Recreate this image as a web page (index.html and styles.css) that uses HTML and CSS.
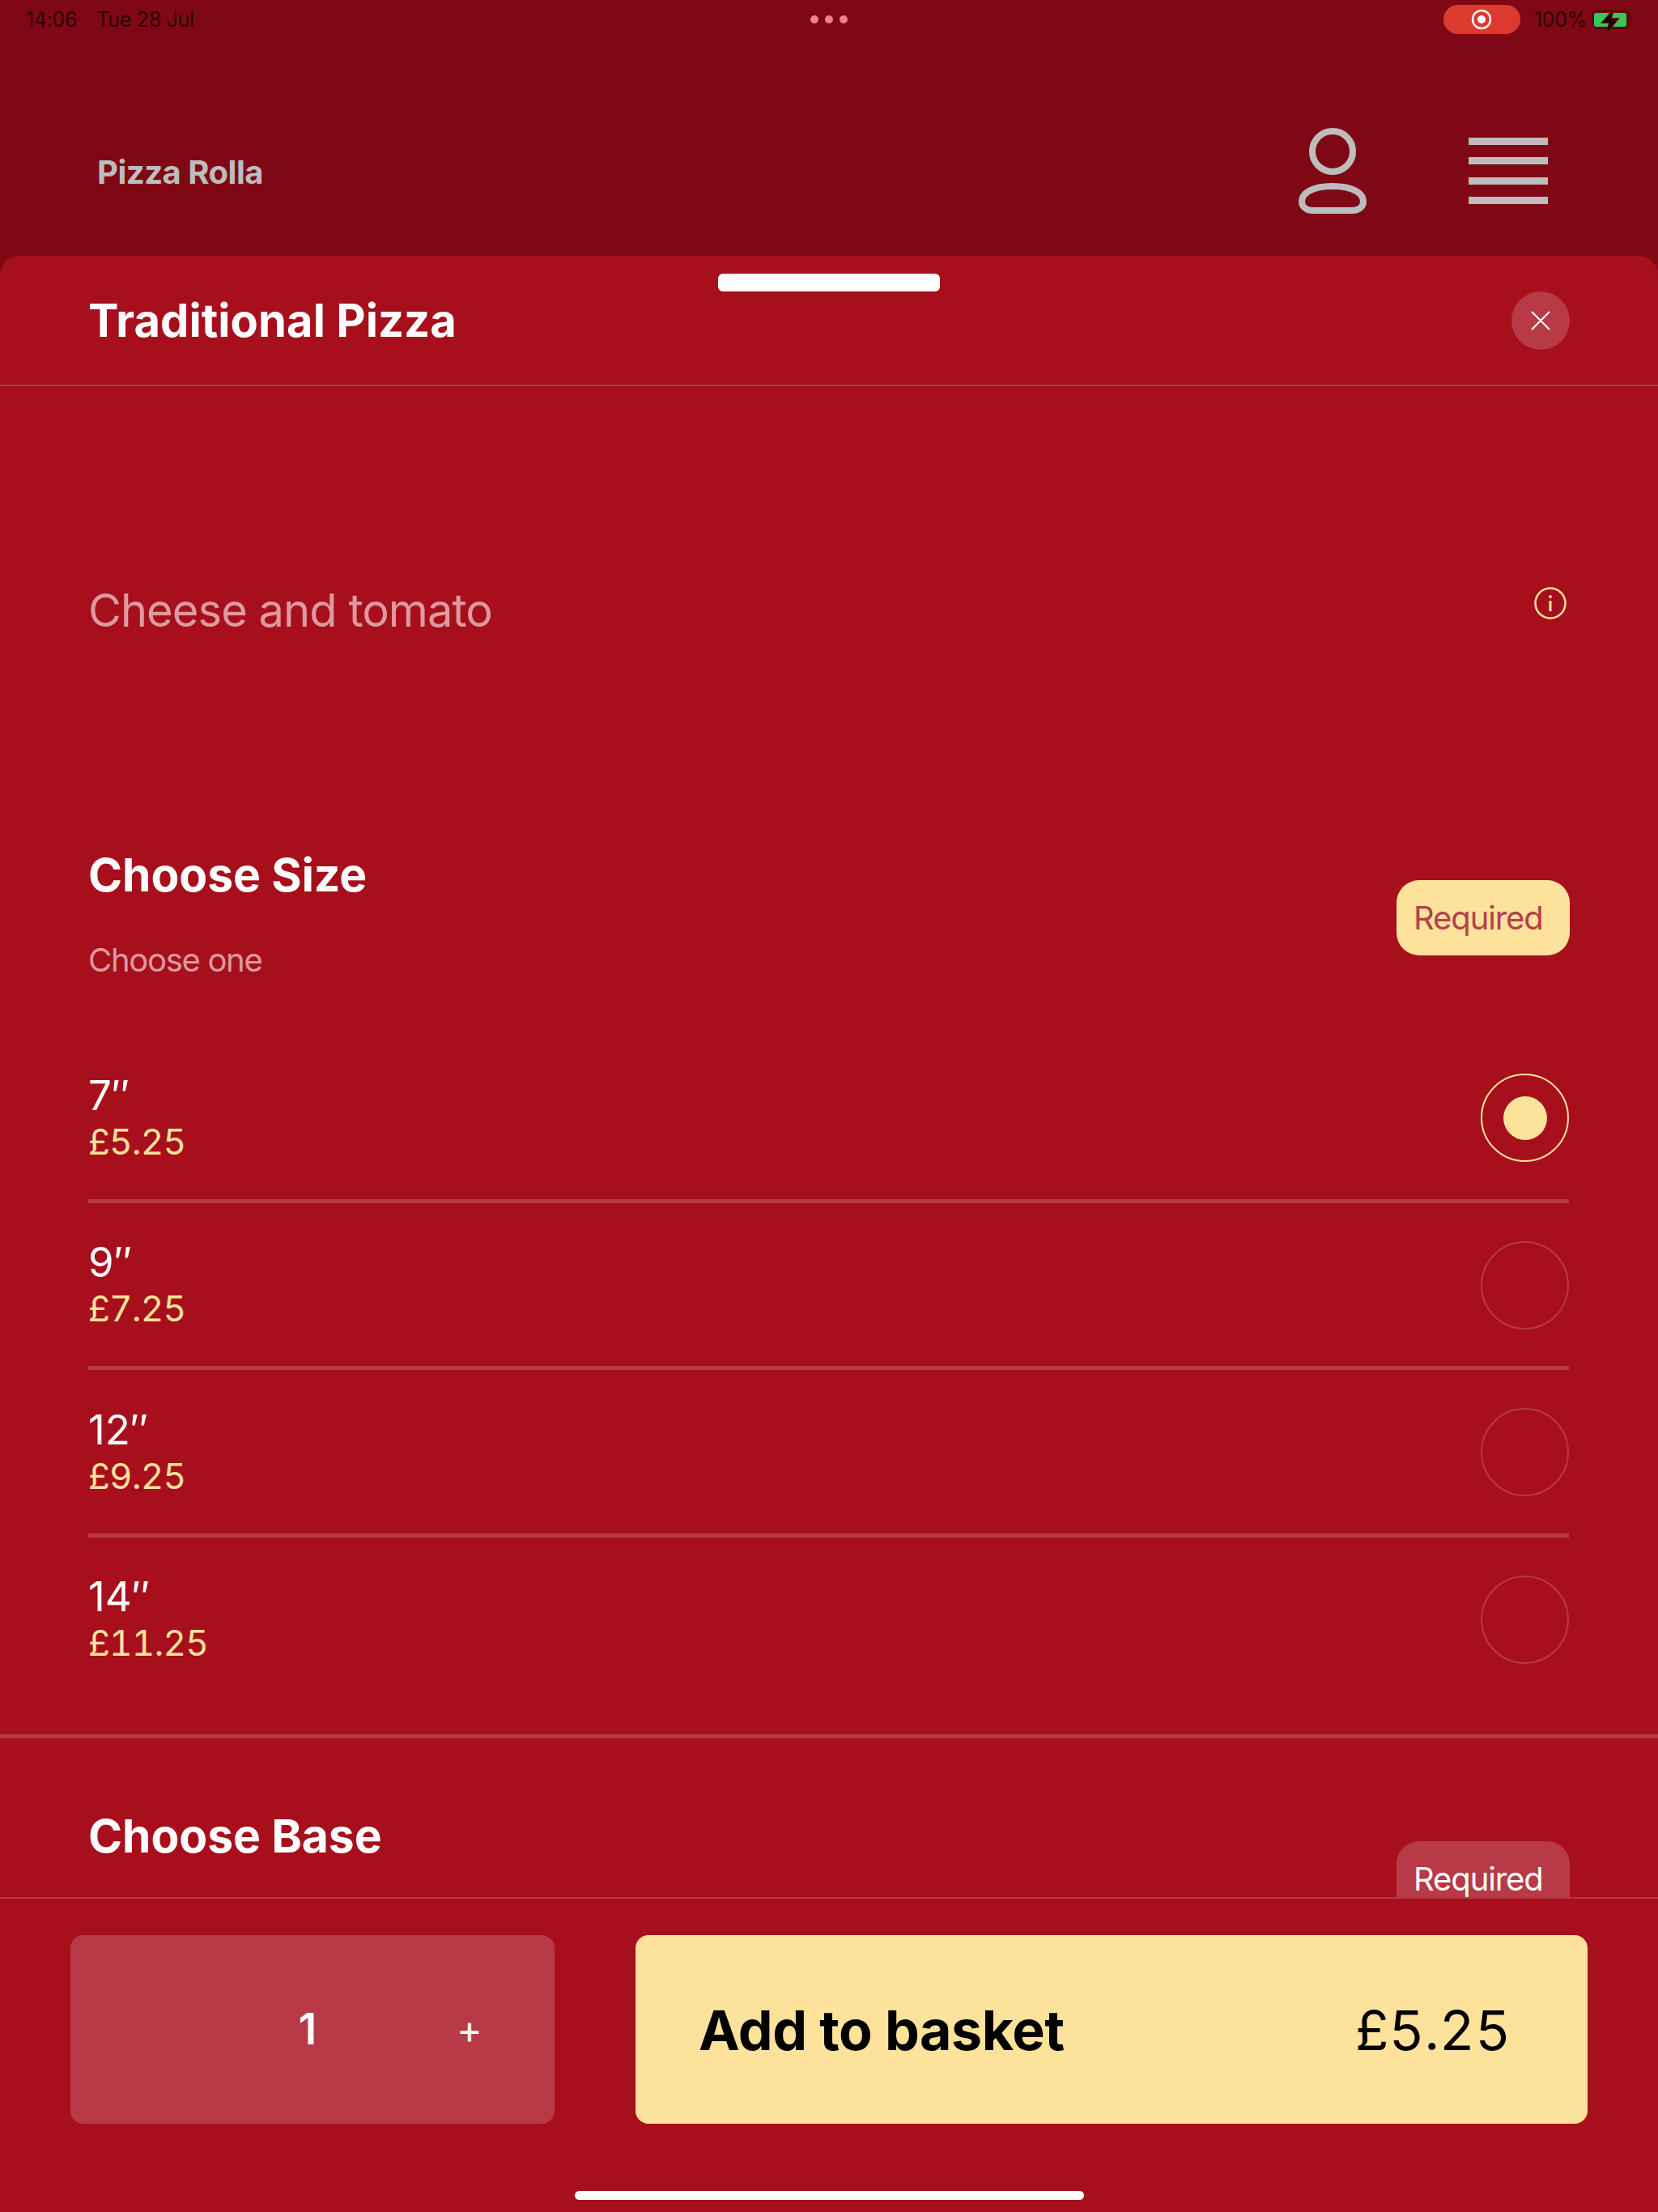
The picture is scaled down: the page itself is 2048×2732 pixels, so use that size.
FILE: index.html
```html
<!DOCTYPE html>
<html lang="en">
<head>
<meta charset="utf-8">
<title>Pizza Rolla</title>
<link rel="stylesheet" href="styles.css">
</head>
<body>
<div class="app">
  <header class="top">
    <div class="status">
      <div class="status-time"><span>14:06</span><span>Tue 28 Jul</span></div>
      <div class="status-dots"><i></i><i></i><i></i></div>
      <div class="status-right">
        <div class="rec">
          <svg width="26" height="26" viewBox="0 0 26 26"><circle cx="13" cy="13" r="11" fill="none" stroke="#fff" stroke-width="2.4"/><circle cx="13" cy="13" r="5" fill="#fff"/></svg>
        </div>
        <span class="pct">100%</span>
        <svg class="battery" width="52" height="32" viewBox="0 0 52 32">
          <rect x="2.500" y="5.500" width="44" height="21" rx="5" fill="none" stroke="#5a0610" stroke-width="3"/>
          <rect x="4" y="8" width="40" height="17" rx="3" fill="#34c759"/>
          <path d="M49 12c3 1 3 7 0 8z" fill="#5a0610"/>
          <path d="M28 4 14 20h9l-3 12 14-17h-9z" fill="#1c0003" stroke="#800815" stroke-width="2" paint-order="stroke"/>
        </svg>
      </div>
    </div>
    <div class="brand-row">
      <div class="brand">Pizza Rolla</div>
      <div class="brand-icons">
        <svg width="93" height="112" viewBox="0 0 93 112" fill="none" stroke="#bdbdbd" stroke-width="8">
          <circle cx="46" cy="32" r="25"/>
          <path d="M22 105H70C79 105 84 100 84 94C84 84 72 75 46 75C20 75 8 84 8 94C8 100 13 105 22 105Z"/>
        </svg>
        <svg width="98" height="82" viewBox="0 0 98 82" fill="#bdbdbd">
          <rect y="0" width="98" height="9"/><rect y="24" width="98" height="9"/><rect y="49" width="98" height="9"/><rect y="73" width="98" height="9"/>
        </svg>
      </div>
    </div>
  </header>

  <main class="sheet">
    <div class="handle"></div>
    <div class="sheet-head">
      <h1 class="sheet-title">Traditional Pizza</h1>
      <button class="close" aria-label="Close">
        <svg width="26" height="26" viewBox="0 0 26 26" stroke="#fff" stroke-width="2"><path d="M2 2l22 22M24 2 2 24"/></svg>
      </button>
    </div>

    <div class="sheet-body">
      <div class="desc">
        <p class="desc-text">Cheese and tomato</p>
        <svg class="info" width="40" height="40" viewBox="0 0 40 40"><circle cx="20" cy="20" r="18.500" fill="none" stroke="#fde29b" stroke-width="2.500"/><rect x="18.500" y="17" width="3" height="13" fill="#fde29b"/><circle cx="20" cy="12" r="2" fill="#fde29b"/></svg>
      </div>

      <section class="group">
        <div class="group-head">
          <div>
            <h2 class="group-title">Choose Size</h2>
            <p class="group-sub">Choose one</p>
          </div>
          <span class="pill pill-on">Required</span>
        </div>
        <div class="rows">
          <div class="row">
            <div class="row-text"><div class="row-name">7″</div><div class="row-price">£5.25</div></div>
            <div class="radio radio-on"></div>
          </div>
          <div class="row">
            <div class="row-text"><div class="row-name">9″</div><div class="row-price">£7.25</div></div>
            <div class="radio"></div>
          </div>
          <div class="row">
            <div class="row-text"><div class="row-name">12″</div><div class="row-price">£9.25</div></div>
            <div class="radio"></div>
          </div>
          <div class="row">
            <div class="row-text"><div class="row-name">14″</div><div class="row-price">£11.25</div></div>
            <div class="radio"></div>
          </div>
        </div>
      </section>

      <section class="group">
        <div class="group-head">
          <div>
            <h2 class="group-title">Choose Base</h2>
          </div>
          <span class="pill">Required</span>
        </div>
      </section>
    </div>

    <footer class="foot">
      <div class="stepper"><span class="qty">1</span><span class="plus">+</span></div>
      <div class="add"><span class="add-label">Add to basket</span><span class="add-price">£5.25</span></div>
    </footer>
    <div class="home"></div>
  </main>
</div>
</body>
</html>
```

FILE: styles.css
```css
* { box-sizing: border-box; margin: 0; padding: 0; }
html, body { height: 100%; }
body { background: #800815; font-family: Inter, "Liberation Sans", sans-serif; color: #fff; overflow: hidden; }
.app { height: 2732px; display: flex; flex-direction: column; }

.top { height: 316px; background: #800815; flex: none; }
.status { height: 48px; padding: 0 32px; display: grid; grid-template-columns: 1fr auto 1fr; align-items: center; color: #2a0308; font-size: 25px; letter-spacing: -0.3px; }
.status-time { display: flex; gap: 24px; }
.status-dots { display: flex; gap: 8px; }
.status-dots i { width: 10px; height: 10px; border-radius: 50%; background: #f0818f; }
.status-right { display: flex; align-items: center; justify-content: flex-end; margin-right: -1px; }
.rec { width: 95px; height: 36px; border-radius: 18px; background: #dc3a2e; display: flex; align-items: center; justify-content: center; margin-right: 17px; }
.pct { margin-right: 5px; }

.brand-row { display: flex; align-items: center; justify-content: space-between; padding: 107px 136px 0 120px; }
.brand { font-size: 40px; font-weight: 700; letter-spacing: -0.5px; color: #bdbdbd; margin-top: 2px; }
.brand-icons { display: flex; align-items: center; gap: 121px; }

.sheet { position: relative; flex: 1; min-height: 0; background: #a80f1c; border-radius: 24px 24px 0 0; display: flex; flex-direction: column; }
.handle { position: absolute; top: 22px; left: 887px; width: 274px; height: 22px; border-radius: 6px; background: #fff; }
.sheet-head { height: 161px; flex: none; padding: 0 109px; display: flex; align-items: center; justify-content: space-between; border-bottom: 2px solid #b73a46; }
.sheet-title { font-size: 56px; font-weight: 700; line-height: 68px; letter-spacing: 0.1px; }
.close { width: 72px; height: 72px; border: 0; border-radius: 50%; background: #b73a46; display: flex; align-items: center; justify-content: center; }

.sheet-body { flex: 1; min-height: 0; overflow: hidden; }
.desc { height: 483px; padding: 243px 113px 0 109px; display: flex; justify-content: space-between; align-items: flex-start; }
.desc-text { font-size: 56px; line-height: 68px; letter-spacing: -0.95px; color: #dd9aa0; }
.info { margin-top: 5px; }

.group { padding-top: 87px; }
.group + .group { border-top: 5px solid #b73a46; margin-top: 37px; }
.group-head { display: flex; justify-content: space-between; align-items: flex-start; padding: 0 109px; }
.group-title { font-size: 57px; font-weight: 700; line-height: 68px; letter-spacing: -0.1px; }
.group-sub { margin-top: 46px; font-size: 40px; line-height: 50px; letter-spacing: -1.3px; color: #dd9aa0; }
.pill { margin-top: 40px; width: 214px; height: 93px; padding: 0 21px; border-radius: 28px; background: #b73a46; color: #fff; font-size: 40px; letter-spacing: -1.1px; display: flex; align-items: center; }
.pill-on { background: #fde29b; color: #b5404a; }

.rows { margin-top: 68px; padding: 0 110px 0 109px; }
.row { height: 206.5px; padding-top: 2px; display: flex; justify-content: space-between; align-items: center; border-bottom: 5px solid #b73a46; }
.row:last-child { border-bottom: 0; padding-bottom: 5px; }
.row-text { margin-top: 2px; }
.row-name { font-size: 51px; line-height: 57px; }
.row-price { font-size: 44px; line-height: 59px; color: #fde29b; font-variant-numeric: tabular-nums; letter-spacing: -0.8px; }
.radio { width: 109px; height: 109px; border-radius: 50%; border: 2px solid #b73a46; display: flex; align-items: center; justify-content: center; }
.radio-on { border-color: #fde29b; }
.radio-on::after { content: ""; width: 54px; height: 54px; border-radius: 50%; background: #fde29b; }

.foot { height: 389px; flex: none; padding: 45px 87px 0 87px; border-top: 2px solid #b73a46; display: flex; align-items: flex-start; justify-content: space-between; }
.stepper { width: 598px; height: 233px; border-radius: 16px; background: #b73a46; display: flex; align-items: center; justify-content: flex-end; padding-right: 5px; }
.qty, .plus { width: 200px; text-align: center; }
.qty { font-size: 54px; font-weight: 600; margin-bottom: 2px; }
.plus { font-size: 48px; }
.add { width: 1176px; height: 233px; border-radius: 16px; background: #fde29b; color: #000; display: flex; align-items: center; justify-content: space-between; padding: 0 95px 0 78px; font-size: 68px; }
.add-label { font-weight: 700; letter-spacing: -0.45px; }
.add-price { font-variant-numeric: tabular-nums; }
.home { position: absolute; left: 710px; top: 2390px; width: 629px; height: 11px; border-radius: 6px; background: #fff; }
```
